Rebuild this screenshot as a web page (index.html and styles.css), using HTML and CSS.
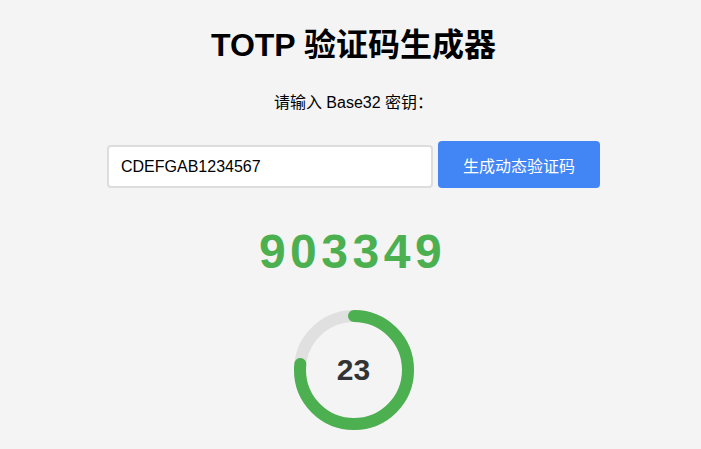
FILE: index.html
```html
<!DOCTYPE html>
<html lang="zh-CN">
<head>
  <meta charset="UTF-8">
  <title>TOTP 验证码生成器</title>
  <link rel="stylesheet" href="styles.css">
</head>
<body>
  <div class="container">
    <h1>TOTP 验证码生成器</h1>
    <p class="label">请输入 Base32 密钥：</p>

    <!-- Secret input and generate button -->
    <div class="input-row">
      <input type="text" class="secret" value="CDEFGAB1234567">
      <button class="generate">生成动态验证码</button>
    </div>

    <div class="code">903349</div>

    <!-- Countdown ring: seconds left in the current 30s window -->
    <div class="timer">
      <svg width="124" height="124" viewBox="0 0 124 124">
        <circle class="track" cx="62" cy="62" r="54"></circle>
        <circle class="progress" cx="62" cy="62" r="54"
                stroke-dasharray="260.2 339.3" transform="rotate(-90 62 62)"></circle>
      </svg>
      <span class="seconds">23</span>
    </div>
  </div>
</body>
</html>
```

FILE: styles.css
```css
/* Page base */
html, body {
  margin: 0;
  padding: 0;
  background: #f4f4f4;
  font-family: "Liberation Sans", Arial, "Noto Sans CJK SC", sans-serif;
  color: #000;
}
.container {
  display: flex;
  flex-direction: column;
  align-items: center;
  padding-top: 26px;
  padding-left: 6px;
}
h1 {
  margin: 0;
  font-size: 32px;
  font-weight: bold;
  line-height: 38px;
}
.label {
  margin: 29px 0 0;
  font-size: 16px;
  line-height: 20px;
}
/* Input row */
.input-row {
  display: flex;
  align-items: flex-end;
  gap: 5px;
  margin-top: 28px;
}
.secret {
  width: 326px;
  height: 43px;
  box-sizing: border-box;
  padding: 0 12px;
  border: 2px solid #ddd;
  border-radius: 4px;
  background: #fff;
  font-family: inherit;
  font-size: 16px;
  color: #000;
}
.generate {
  width: 162px;
  height: 47px;
  border: none;
  border-radius: 4px;
  background: #4285f4;
  color: #fff;
  font-family: inherit;
  font-size: 16px;
  cursor: pointer;
}
/* Current code */
.code {
  margin-top: 40px;
  font-size: 48px;
  font-weight: bold;
  letter-spacing: 4.5px;
  line-height: 48px;
  color: #4caf50;
  padding-right: 2px;
}
/* Countdown ring */
.timer {
  position: relative;
  width: 124px;
  height: 124px;
  margin-top: 32px;
}
.timer svg {
  display: block;
}
.track, .progress {
  fill: none;
  stroke-width: 12;
}
.track {
  stroke: #e0e0e0;
}
.progress {
  stroke: #4caf50;
  stroke-linecap: round;
}
.seconds {
  position: absolute;
  inset: 0;
  display: flex;
  align-items: center;
  justify-content: center;
  font-size: 30px;
  font-weight: bold;
  color: #333;
}
```
